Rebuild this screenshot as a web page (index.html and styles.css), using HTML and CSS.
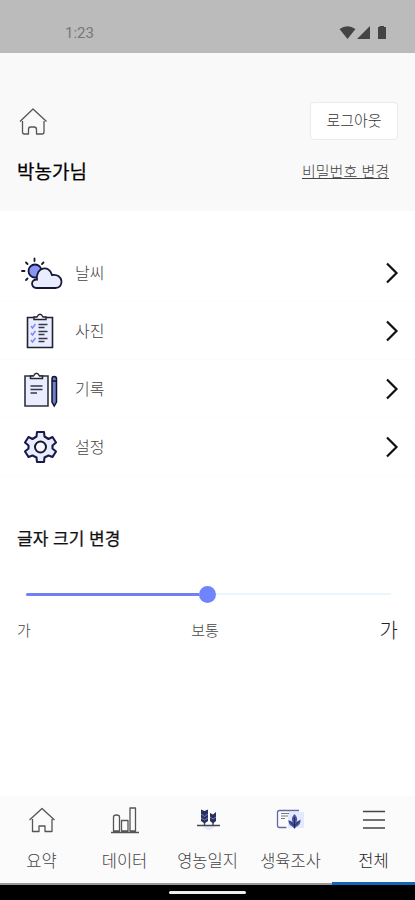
FILE: index.html
```html
<!DOCTYPE html>
<html lang="ko">
<head>
<meta charset="utf-8">
<title>전체</title>
<link rel="stylesheet" href="styles.css">
</head>
<body>
<div class="screen">
  <div class="status">
    <span class="time">1:23</span>
    <svg class="signals" width="48" height="16" viewBox="339 25 48 16">
      <path d="M339.500 29 Q347.500 23.500 355.500 29 L347.500 39 Z"/>
      <path d="M370 26 V39 H357 Z"/>
      <path d="M379.500 26 H384 V27 H386 V39 H378 V27 H379.500 Z"/>
    </svg>
  </div>
  <header class="profile">
    <div class="row top">
      <svg class="line home" width="30" height="30" viewBox="0 0 30 30"><path d="M3 15.500 L16 3 L29.500 15.500 M5.500 15 V26 Q5.500 28 7.500 28 H11.500 V23.500 Q11.500 21 13.500 21 H17 Q19.500 21 19.500 23.500 V28 H25 Q27 28 27 26 V15"/></svg>
      <button class="logout">로그아웃</button>
    </div>
    <div class="row who">
      <strong class="name">박농가님</strong>
      <a class="password">비밀번호 변경</a>
    </div>
  </header>
  <ul class="menu">
    <li>
      <svg class="pic" width="44" height="40" viewBox="19 253 44 40">
        <g stroke="#151832" stroke-width="1.800" stroke-linecap="round">
          <circle cx="35" cy="271" r="6.500" fill="#8795f7"/>
          <path d="M34.500 258.500 V261 M26 262.500 L27.500 264 M43.500 262.500 L42 264 M22 271 H24.500 M26 280 L27.500 278.500"/>
          <path d="M36.500 288 C30.500 288 30.500 279 37 279.500 C35.500 267 49.500 264.500 52 275 C63.500 273 64.500 288 55.500 288 Z" fill="#e9edff"/>
        </g>
      </svg>
      <span>날씨</span>
      <svg class="chevron" width="14" height="24" viewBox="0 0 14 24"><path d="M2 2.500 L11.500 12 L2 21.500"/></svg>
    </li>
    <li>
      <svg class="pic" width="44" height="40" viewBox="19 311 44 40">
        <path d="M27.500 317.500 H52.500 V347.500 H27.500 Z" fill="#e9edff" stroke="#20222f" stroke-width="1.600"/>
        <path d="M34 319.500 V317 H37 Q40 311.500 43 317 H46 V319.500 Z" fill="#fff" stroke="#20222f" stroke-width="1.400"/>
        <path d="M38.500 324.500 H47.500 M38.500 327.500 H44.500 M38.500 331.500 H47.500 M38.500 334.500 H44.500 M38.500 338.500 H47.500 M38.500 341.500 H44.500" stroke="#353846" stroke-width="1.500"/>
        <path d="M31 326 L32.500 328 L35.500 324 M31 333 L32.500 335 L35.500 331 M31 340 L32.500 342 L35.500 338" fill="none" stroke="#7888fa" stroke-width="1.500"/>
      </svg>
      <span>사진</span>
      <svg class="chevron" width="14" height="24" viewBox="0 0 14 24"><path d="M2 2.500 L11.500 12 L2 21.500"/></svg>
    </li>
    <li>
      <svg class="pic" width="44" height="40" viewBox="19 369 44 40">
        <path d="M25 376 H48 V406 H25 Z" fill="#e9edff" stroke="#30323e" stroke-width="1.600"/>
        <path d="M30.500 378.500 V376 H33.500 Q36.500 370.500 39.500 376 H42.500 V378.500 Z" fill="#fff" stroke="#252733" stroke-width="1.500"/>
        <path d="M30.500 386 H42.500 M30.500 389.500 H42.500 M30.500 393 H37" stroke="#353846" stroke-width="1.500"/>
        <path d="M52 379 V402 L54.200 406 L56.500 402 V379 Q56.500 376.500 54.200 376.500 Q52 376.500 52 379 Z M52 381 H56.500" fill="#7080c9" stroke="#11132d" stroke-width="1.500"/>
      </svg>
      <span>기록</span>
      <svg class="chevron" width="14" height="24" viewBox="0 0 14 24"><path d="M2 2.500 L11.500 12 L2 21.500"/></svg>
    </li>
    <li>
      <svg class="pic" width="44" height="40" viewBox="19 427 44 40">
        <path d="M37 432 H44 L44.500 436.500 L48.500 439 L52.500 437 L56 442.500 L52.500 445.500 V448.500 L56 451.500 L52.500 457 L48.500 455.500 L44.500 457.500 L44 462 H37 L36.500 457.500 L32.500 455.500 L28.500 457 L25 451.500 L28.500 448.500 V445.500 L25 442.500 L28.500 437 L32.500 439 L36.500 436.500 Z" fill="#e9edff" stroke="#171a4b" stroke-width="2.100" stroke-linejoin="round"/>
        <circle cx="40.500" cy="447" r="5.500" fill="#f8f9ff" stroke="#151832" stroke-width="2"/>
      </svg>
      <span>설정</span>
      <svg class="chevron" width="14" height="24" viewBox="0 0 14 24"><path d="M2 2.500 L11.500 12 L2 21.500"/></svg>
    </li>
  </ul>
  <section class="size">
    <h2>글자 크기 변경</h2>
    <div class="slider"><div class="filled"></div><div class="thumb"></div><div class="rest"></div></div>
    <div class="labels"><span>가</span><span class="normal">보통</span><span class="large">가</span></div>
  </section>
  <nav class="tabs">
    <a class="tab">
      <svg class="line" width="34" height="30" viewBox="25 805 34 30"><path d="M29.500 820 L42 808.500 L54.500 820 M32.500 819 V831.500 H39 V826 H45 V831.500 H52 V819"/></svg>
      <span>요약</span>
    </a>
    <a class="tab">
      <svg class="line" width="34" height="30" viewBox="108 805 34 30"><path d="M111 832.500 H139 M113.500 831 V817 Q113.500 815 116.500 815 Q119.500 815 119.500 817 V831 Z M121.500 831 V820.500 H128 V831 Z M130 831 V808 H135.500 V831 Z"/></svg>
      <span>데이터</span>
    </a>
    <a class="tab">
      <svg width="34" height="30" viewBox="191 805 34 30">
        <path d="M203 826 Q209 834 215 826 Z" fill="#e4e9fb"/>
        <path d="M201 809.500 L204.500 811 L208 809.500 V821 L204.500 823.500 L201 821 Z M210 813 L213 814.500 L216 812 V821 L213 823.500 L210 821 Z" fill="#27305f"/>
        <path d="M201 814 L204.500 816.500 L208 814 M201 818 L204.500 820 L208 818 M210 817 L213 819 L216 817" fill="none" stroke="#8390cc" stroke-width=".8"/>
        <path d="M204.500 823 V825 M213 823 V825 M197 825.500 H220" stroke="#454752" stroke-width="1.400"/>
      </svg>
      <span>영농일지</span>
    </a>
    <a class="tab">
      <svg width="34" height="30" viewBox="274 805 34 30">
        <path d="M288 812 H304 V828 H288 Z" fill="#e5e9ff"/>
        <path d="M299 810.500 H279.500 Q277.500 810.500 277.500 812.500 V825.500 Q277.500 827.500 279.500 827.500 H286.500" fill="none" stroke="#6568a3" stroke-width="1.300"/>
        <path d="M281 813.500 H289 M281 816 H288 M281 818.500 H285" stroke="#777985" stroke-width="1.200"/>
        <path d="M294.500 814 Q298.500 818 296.500 822 L300.500 819.500 Q301 825 296 827 L294.500 829 L293 827 Q288 825 288.500 820 L292.500 822 Q290.500 818 294.500 814 Z" fill="#4b579f"/>
        <path d="M294.500 817 V828 M289.500 821 L294.500 826 L299.500 821" fill="none" stroke="#202650" stroke-width="1"/>
      </svg>
      <span>생육조사</span>
    </a>
    <a class="tab active">
      <svg class="line bars" width="34" height="30" viewBox="357 805 34 30"><path d="M363 811.500 H385 M363 820 H385 M363 828 H385"/></svg>
      <span>전체</span>
    </a>
  </nav>
  <div class="gesture"><div class="pill"></div></div>
</div>
</body>
</html>
```
FILE: styles.css
```css
* { box-sizing: border-box; }
body {
  margin: 0;
  background: #fff;
  color: #444;
  font-family: "Noto Sans CJK KR", sans-serif;
  font-weight: 300;
}
.screen { width: 415px; height: 900px; display: flex; flex-direction: column; overflow: hidden; }
.status {
  height: 53px;
  padding: 13px 28px 0 65px;
  display: flex;
  align-items: center;
  justify-content: space-between;
  background: #bbb;
}
.time { font: 400 15px/20px Roboto, sans-serif; color: #777; }
.signals { fill: #444; }
.profile { height: 158px; padding: 49px 17px 0; background: #f9f9f9; }
.row { display: flex; justify-content: space-between; align-items: center; }
.top { height: 38px; }
.who { height: 34px; margin-top: 14px; padding-right: 9px; }
.line { fill: none; stroke: #555; stroke-width: 1.3; stroke-linejoin: round; }
.logout {
  width: 88px;
  height: 38px;
  padding: 0 0 2px;
  border: 1px solid #ebebeb;
  border-radius: 4px;
  background: #fff;
  color: #333;
  font: 300 15px/20px "Noto Sans CJK KR", sans-serif;
}
.name { font-size: 19px; line-height: 28px; font-weight: 400; color: #000; -webkit-text-stroke: .25px #000; }
.password { font-size: 15px; line-height: 24px; text-decoration: underline; text-underline-offset: 1px; text-decoration-thickness: 1px; }
.menu { margin: 33px 0 0; padding: 0; list-style: none; }
.menu li {
  height: 58px;
  padding: 0 16px 0 19px;
  display: flex;
  align-items: center;
  border-bottom: 1px solid #fcfcfc;
}
.menu span { margin-left: 12px; padding-bottom: 2px; flex: 1; font-size: 16px; line-height: 24px; }
.chevron { fill: none; stroke: #111; stroke-width: 2.2; }
.size { margin-top: 48px; padding: 0 17px; }
.size h2 { margin: 0; font-size: 17px; line-height: 28px; font-weight: 400; color: #111; -webkit-text-stroke: .25px #111; }
.slider { height: 18px; margin: 33px 7px 0 9px; display: flex; align-items: center; }
.filled { width: 173px; height: 3px; border-radius: 2px 0 0 2px; background: #6f80f5; }
.thumb { width: 17px; height: 17px; border-radius: 50%; background: #7184ff; }
.rest { flex: 1; height: 2px; background: #eaf6fe; }
.labels { height: 32px; margin-top: 11px; display: grid; grid-template-columns: 1fr auto 1fr; align-items: center; font-size: 15px; line-height: 24px; }
.normal { margin-right: 5px; }
.large { justify-self: end; font-size: 20px; color: #222; }
.tabs { height: 89px; margin-top: auto; display: grid; grid-template-columns: repeat(5, 1fr); background: #fbfbfb; }
.tab {
  padding-top: 9px;
  display: flex;
  flex-direction: column;
  align-items: center;
  border-bottom: 2px solid #999;
  font-size: 16.5px;
  line-height: 24px;
  white-space: nowrap;
}
.tab span { margin-top: 13px; }
.tab.active { border-bottom: 3px solid #1267b4; color: #222; }
.bars { stroke-width: 1.6; stroke: #444; }
.gesture { height: 15px; display: flex; justify-content: center; align-items: center; background: #000; }
.pill { width: 77px; height: 3px; border-radius: 2px; background: #eee; }
```
